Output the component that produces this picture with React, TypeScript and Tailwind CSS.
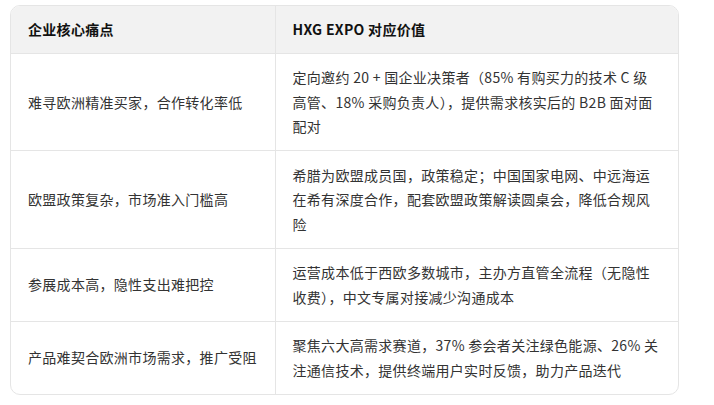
const rows: [string, string][] = [
  [
    "难寻欧洲精准买家，合作转化率低",
    "定向邀约 20 + 国企业决策者（85% 有购买力的技术 C 级高管、18% 采购负责人），提供需求核实后的 B2B 面对面配对",
  ],
  [
    "欧盟政策复杂，市场准入门槛高",
    "希腊为欧盟成员国，政策稳定；中国国家电网、中远海运在希有深度合作，配套欧盟政策解读圆桌会，降低合规风险",
  ],
  [
    "参展成本高，隐性支出难把控",
    "运营成本低于西欧多数城市，主办方直管全流程（无隐性收费），中文专属对接减少沟通成本",
  ],
  [
    "产品难契合欧洲市场需求，推广受阻",
    "聚焦六大高需求赛道，37% 参会者关注绿色能源、26% 关注通信技术，提供终端用户实时反馈，助力产品迭代",
  ],
];

export default function App() {
  return (
    <div
      className="w-[714px] h-[405px] bg-white pt-[5px] pl-[10px]"
      style={{ fontFamily: '"Segoe UI", "Noto Sans CJK SC", sans-serif' }}
    >
      <div className="w-[669px] overflow-hidden rounded-[10px] border border-[#e5e5e5]">
        <table className="w-full border-collapse text-[14px] leading-[24.5px] tracking-[0.3px] text-[#333]">
          <colgroup>
            <col className="w-[264px]" />
            <col />
          </colgroup>
          <thead>
            <tr className="bg-[#f2f2f2]">
              <th className="h-[47px] px-[17px] text-left font-bold text-[#111]">企业核心痛点</th>
              <th className="border-l border-[#e5e5e5] px-[17px] text-left font-bold text-[#111]">
                HXG EXPO 对应价值
              </th>
            </tr>
          </thead>
          <tbody>
            {rows.map(([pain, value]) => (
              <tr key={pain} className="border-t border-[#e5e5e5]">
                <td className="px-[17px] py-[11.5px] align-middle">{pain}</td>
                <td className="border-l border-[#e5e5e5] px-[17px] py-[11.5px]">{value}</td>
              </tr>
            ))}
          </tbody>
        </table>
      </div>
    </div>
  );
}
